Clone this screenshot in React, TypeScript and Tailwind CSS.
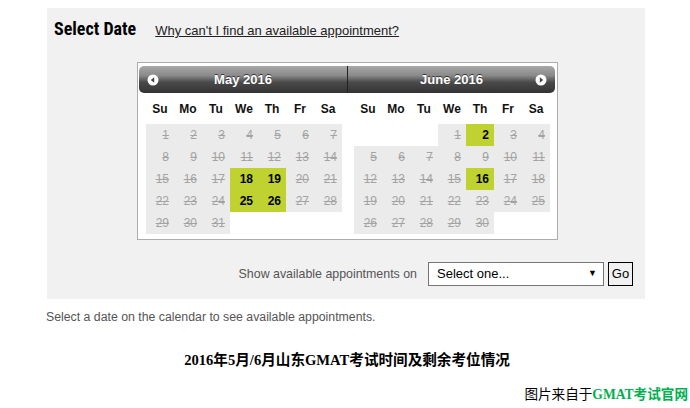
const dayNames = ['Su', 'Mo', 'Tu', 'We', 'Th', 'Fr', 'Sa'];

interface MonthProps {
  title: string;
  offset: number;
  days: number;
  available: number[];
  side: 'prev' | 'next';
}

function NavIcon({ dir }: { dir: 'prev' | 'next' }) {
  return (
    <svg width="12" height="12" viewBox="0 0 12 12">
      <circle cx="6" cy="6" r="5.5" fill="#fff" />
      {dir === 'prev' ? (
        <path d="M7.2 3.2 L3.8 6 L7.2 8.8 Z" fill="#444" />
      ) : (
        <path d="M4.8 3.2 L8.2 6 L4.8 8.8 Z" fill="#444" />
      )}
    </svg>
  );
}

function Month({ title, offset, days, available, side }: MonthProps) {
  const cells: (number | null)[] = [];
  for (let i = 0; i < offset; i++) cells.push(null);
  for (let d = 1; d <= days; d++) cells.push(d);

  return (
    <div className="flex flex-col w-[208px]">
      <div
        className={`relative flex items-center justify-center h-[27px] bg-[linear-gradient(to_bottom,#a8a8a8_0%,#8a8a8a_35%,#4a4a4a_60%,#333_100%)] ${
          side === 'prev' ? 'rounded-l-[5px]' : 'rounded-r-[5px] border-l border-[#222]'
        }`}
      >
        <div className={`absolute top-[8px] ${side === 'prev' ? 'left-[8px]' : 'right-[8px]'}`}>
          <NavIcon dir={side} />
        </div>
        <span className="text-white font-bold text-[13px] [text-shadow:0_-1px_0_#333]">{title}</span>
      </div>
      <div className="px-[7px]">
        <div className="grid grid-cols-[repeat(7,28px)] h-[31px] items-center">
          {dayNames.map((d) => (
            <div key={d} className="text-center font-bold text-[12px] text-[#111]">
              {d}
            </div>
          ))}
        </div>
        <div className="grid grid-cols-[repeat(7,28px)] auto-rows-[22px]">
          {cells.map((d, i) =>
            d === null ? (
              <div key={i} />
            ) : available.includes(d) ? (
              <div key={i} className="bg-[#bfd22f] flex items-center justify-end pr-[5px] text-[12px] font-bold text-black">
                {d}
              </div>
            ) : (
              <div key={i} className="bg-[#ebebeb] flex items-center justify-end pr-[5px] text-[12px] text-[#a3a3a3] line-through">
                {d}
              </div>
            )
          )}
        </div>
      </div>
    </div>
  );
}

export default function App() {
  return (
    <div className="w-[690px] h-[408px] bg-white font-['Liberation_Sans',Arial,sans-serif] overflow-hidden">
      <div className="pl-[47px] pt-[8px]">
        <div className="w-[598px] h-[291px] bg-[#f1f1f1] flex flex-col">
          <div className="flex items-baseline gap-[19px] pl-[7px] pt-[7px]">
            <h2 className="font-['Liberation_Sans_Narrow','Roboto_Condensed',sans-serif] font-bold text-[18px] text-black">
              Select Date
            </h2>
            <a className="text-[13px] text-[#222] underline">Why can't I find an available appointment?</a>
          </div>
          <div className="ml-[90px] mt-[20px] w-[421px] h-[178px] bg-white border border-[#acacac] pt-[3px] px-[1px] flex">
            <Month title="May 2016" offset={0} days={31} available={[18, 19, 25, 26]} side="prev" />
            <Month title="June 2016" offset={3} days={30} available={[2, 16]} side="next" />
          </div>
          <div className="flex items-center justify-end pr-[12px] mt-[22px]">
            <span className="text-[12.4px] text-[#555] mr-[11px]">Show available appointments on</span>
            <div className="w-[176px] h-[24px] bg-white border border-[#767676] flex items-center justify-between pl-[8px] pr-[6px]">
              <span className="text-[13px] text-black">Select one...</span>
              <span className="text-[9px] text-black">▼</span>
            </div>
            <button className="ml-[4px] w-[25px] h-[24px] border border-black bg-[#f1f1f1] text-[13px] text-black flex items-center justify-center">
              Go
            </button>
          </div>
        </div>
      </div>
      <p className="pl-[46px] mt-[9px] text-[12.3px] leading-[18px] text-[#555]">
        Select a date on the calendar to see available appointments.
      </p>
      <p className="mt-[23px] text-center pl-[4px] text-[14.6px] leading-[22px] font-bold text-black font-['Liberation_Serif','Noto_Sans_CJK_SC',serif]">
        2016年5月/6月山东GMAT考试时间及剩余考位情况
      </p>
      <p className="mt-[14px] text-right pr-[2px] text-[13.6px] leading-[20px] text-black font-['Liberation_Serif','Noto_Sans_CJK_SC',serif]">
        图片来自于<span className="text-[#00b050] font-bold">GMAT考试官网</span>
      </p>
    </div>
  );
}
